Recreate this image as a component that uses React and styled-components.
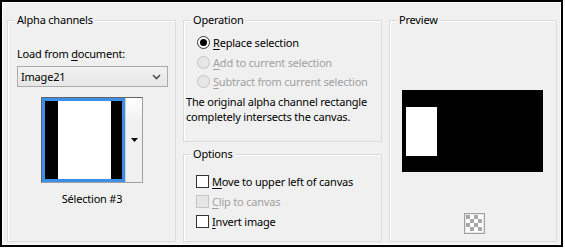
import React from "react";
import styled, { createGlobalStyle } from "styled-components";

const Global = createGlobalStyle`
  html, body { margin: 0; padding: 0; background: #fff; }
  body { font-family: "Noto Sans", "Open Sans", sans-serif; font-size: 11px; letter-spacing: -0.2px; color: #000; }
`;

const Frame = styled.div`
  box-sizing: border-box;
  width: 563px;
  height: 247px;
  border: 2px solid #000;
  box-shadow: inset 0 0 0 1px #fff;
  background: #f0f0f0;
  display: flex;
  align-items: stretch;
  padding: 18px 0 3px 5px;
  gap: 7px;
`;

const Group = styled.div`
  position: relative;
  box-sizing: border-box;
  width: ${(p) => p.$w}px;
  height: ${(p) => (p.$h ? `${p.$h}px` : "auto")};
  border: 1px solid #dcdcdc;
  box-shadow: inset 1px 1px 0 #fff;
  display: flex;
  flex-direction: column;
  flex: ${(p) => (p.$grow ? "1 1 auto" : "none")};
  padding: ${(p) => p.$pad};
`;

const Legend = styled.span`
  position: absolute;
  top: -9px;
  left: 7px;
  padding: 0 2px;
  background: #f0f0f0;
  line-height: 15px;
`;

const Column = styled.div`
  display: flex;
  flex-direction: column;
  gap: 12px;
  width: 199px;
`;

const Text = styled.div`
  line-height: 15px;
  white-space: nowrap;
  color: ${(p) => (p.$disabled ? "#a0a0a0" : "#000")};
`;

const U = styled.span`
  text-decoration: underline;
  text-underline-offset: 2px;
`;

const Combo = styled.div`
  box-sizing: border-box;
  margin-top: 5px;
  width: 151px;
  height: 21px;
  border: 1px solid #acacac;
  background: linear-gradient(#f2f2f2, #e6e6e6);
  display: flex;
  align-items: center;
  justify-content: space-between;
  padding: 0 6px 0 3px;
  line-height: 15px;
`;

const ThumbButton = styled.div`
  box-sizing: border-box;
  margin: 10px 0 0 24px;
  width: 102px;
  height: 86px;
  border: 1px solid #646464;
  border-right-color: #a0a0a0;
  border-bottom-color: #a0a0a0;
  display: flex;
  background: #fff;
`;

const ThumbImage = styled.div`
  box-sizing: border-box;
  width: 83px;
  height: 100%;
  border: 3px solid #3d8ee6;
  background: #fff;
  display: flex;
  justify-content: space-between;
`;

const Bar = styled.div`
  width: ${(p) => p.$w}px;
  background: #000;
`;

const ThumbArrow = styled.div`
  flex: 1;
  display: flex;
  align-items: center;
  justify-content: center;
  background: linear-gradient(#fff, #f0f0f0 30%);
  border-left: 1px solid #d0d0d0;
`;

const Caption = styled.div`
  margin-top: 8px;
  width: 150px;
  text-align: center;
  line-height: 15px;
`;

const OptionRow = styled.div`
  display: flex;
  align-items: center;
  flex: none;
  height: ${(p) => p.$h || 20}px;
  gap: 3px;
  color: ${(p) => (p.$disabled ? "#a0a0a0" : "#000")};
  line-height: 15px;
  white-space: nowrap;
`;

const Radio = styled.span`
  box-sizing: border-box;
  width: 13px;
  height: 13px;
  border-radius: 50%;
  border: 1px solid ${(p) => (p.$disabled ? "#c4c4c4" : "#333")};
  background: ${(p) => (p.$disabled ? "#e6e6e6" : "#fff")};
  display: flex;
  align-items: center;
  justify-content: center;
  &::after {
    content: "";
    width: 7px;
    height: 7px;
    border-radius: 50%;
    background: #000;
    display: ${(p) => (p.$checked ? "block" : "none")};
  }
`;

const Check = styled.span`
  box-sizing: border-box;
  width: 13px;
  height: 13px;
  border: 1px solid ${(p) => (p.$disabled ? "#c4c4c4" : "#333")};
  background: ${(p) => (p.$disabled ? "#e6e6e6" : "#fff")};
`;

const Desc = styled.div`
  margin: 2px 0 0 -11px;
  line-height: 15px;
`;

const PreviewBox = styled.div`
  margin: 69px 0 0 12px;
  line-height: 0;
`;

const CheckerWrap = styled.div`
  margin-top: auto;
  margin-bottom: 7px;
  display: flex;
  justify-content: center;
  padding-left: 3px;
  line-height: 0;
`;

function Chevron() {
  return (
    <svg width="9" height="6" viewBox="0 0 9 6">
      <path d="M1 1 L4.5 4.5 L8 1" fill="none" stroke="#505050" strokeWidth="1.6" />
    </svg>
  );
}

function Checker() {
  const cells = [];
  for (let r = 0; r < 4; r++)
    for (let c = 0; c < 4; c++)
      if ((r + c) % 2 === 0)
        cells.push(<rect key={`${r}-${c}`} x={2 + c * 4} y={2 + r * 4} width="4" height="4" fill="#a8a8a8" />);
  return (
    <svg width="21" height="21" viewBox="0 0 21 21">
      <rect x="0.5" y="0.5" width="20" height="20" fill="#e8e8e8" stroke="#a0a0a0" />
      <rect x="2" y="2" width="17" height="17" fill="#fff" />
      {cells}
    </svg>
  );
}

export default function App() {
  return (
    <>
      <Global />
      <Frame>
        <Group $w={169} $pad="25px 9px 0 9px">
          <Legend>Alpha channels</Legend>
          <Text>
            Load from <U>d</U>ocument:
          </Text>
          <Combo>
            <span>Image21</span>
            <Chevron />
          </Combo>
          <ThumbButton>
            <ThumbImage>
              <Bar $w={13} />
              <Bar $w={11} />
            </ThumbImage>
            <ThumbArrow>
              <svg width="7" height="4" viewBox="0 0 7 4">
                <path d="M0 0 H7 L3.5 4 Z" fill="#000" />
              </svg>
            </ThumbArrow>
          </ThumbButton>
          <Caption>Sélection #3</Caption>
        </Group>
        <Column>
          <Group $w={199} $h={122} $pad="12px 0 0 13px">
            <Legend>Operation</Legend>
            <OptionRow $h={19.5}>
              <Radio $checked />
              <span>
                <U>R</U>eplace selection
              </span>
            </OptionRow>
            <OptionRow $h={19.5} $disabled>
              <Radio $disabled />
              <span>
                <U>A</U>dd to current selection
              </span>
            </OptionRow>
            <OptionRow $h={19.5} $disabled>
              <Radio $disabled />
              <span>
                <U>S</U>ubtract from current selection
              </span>
            </OptionRow>
            <Desc>
              The original alpha channel rectangle
              <br />
              completely intersects the canvas.
            </Desc>
          </Group>
          <Group $w={199} $grow $pad="16px 0 0 12px">
            <Legend>Options</Legend>
            <OptionRow>
              <Check />
              <span>
                <U>M</U>ove to upper left of canvas
              </span>
            </OptionRow>
            <OptionRow $disabled>
              <Check $disabled />
              <span>
                <U>C</U>lip to canvas
              </span>
            </OptionRow>
            <OptionRow>
              <Check />
              <span>
                <U>I</U>nvert image
              </span>
            </OptionRow>
          </Group>
        </Column>
        <Group $w={168} $pad="0">
          <Legend>Preview</Legend>
          <PreviewBox>
            <svg width="141" height="82" viewBox="0 0 141 82">
              <rect width="141" height="82" fill="#000" />
              <rect x="4" y="17" width="31" height="49" fill="#fff" />
            </svg>
          </PreviewBox>
          <CheckerWrap>
            <Checker />
          </CheckerWrap>
        </Group>
      </Frame>
    </>
  );
}
